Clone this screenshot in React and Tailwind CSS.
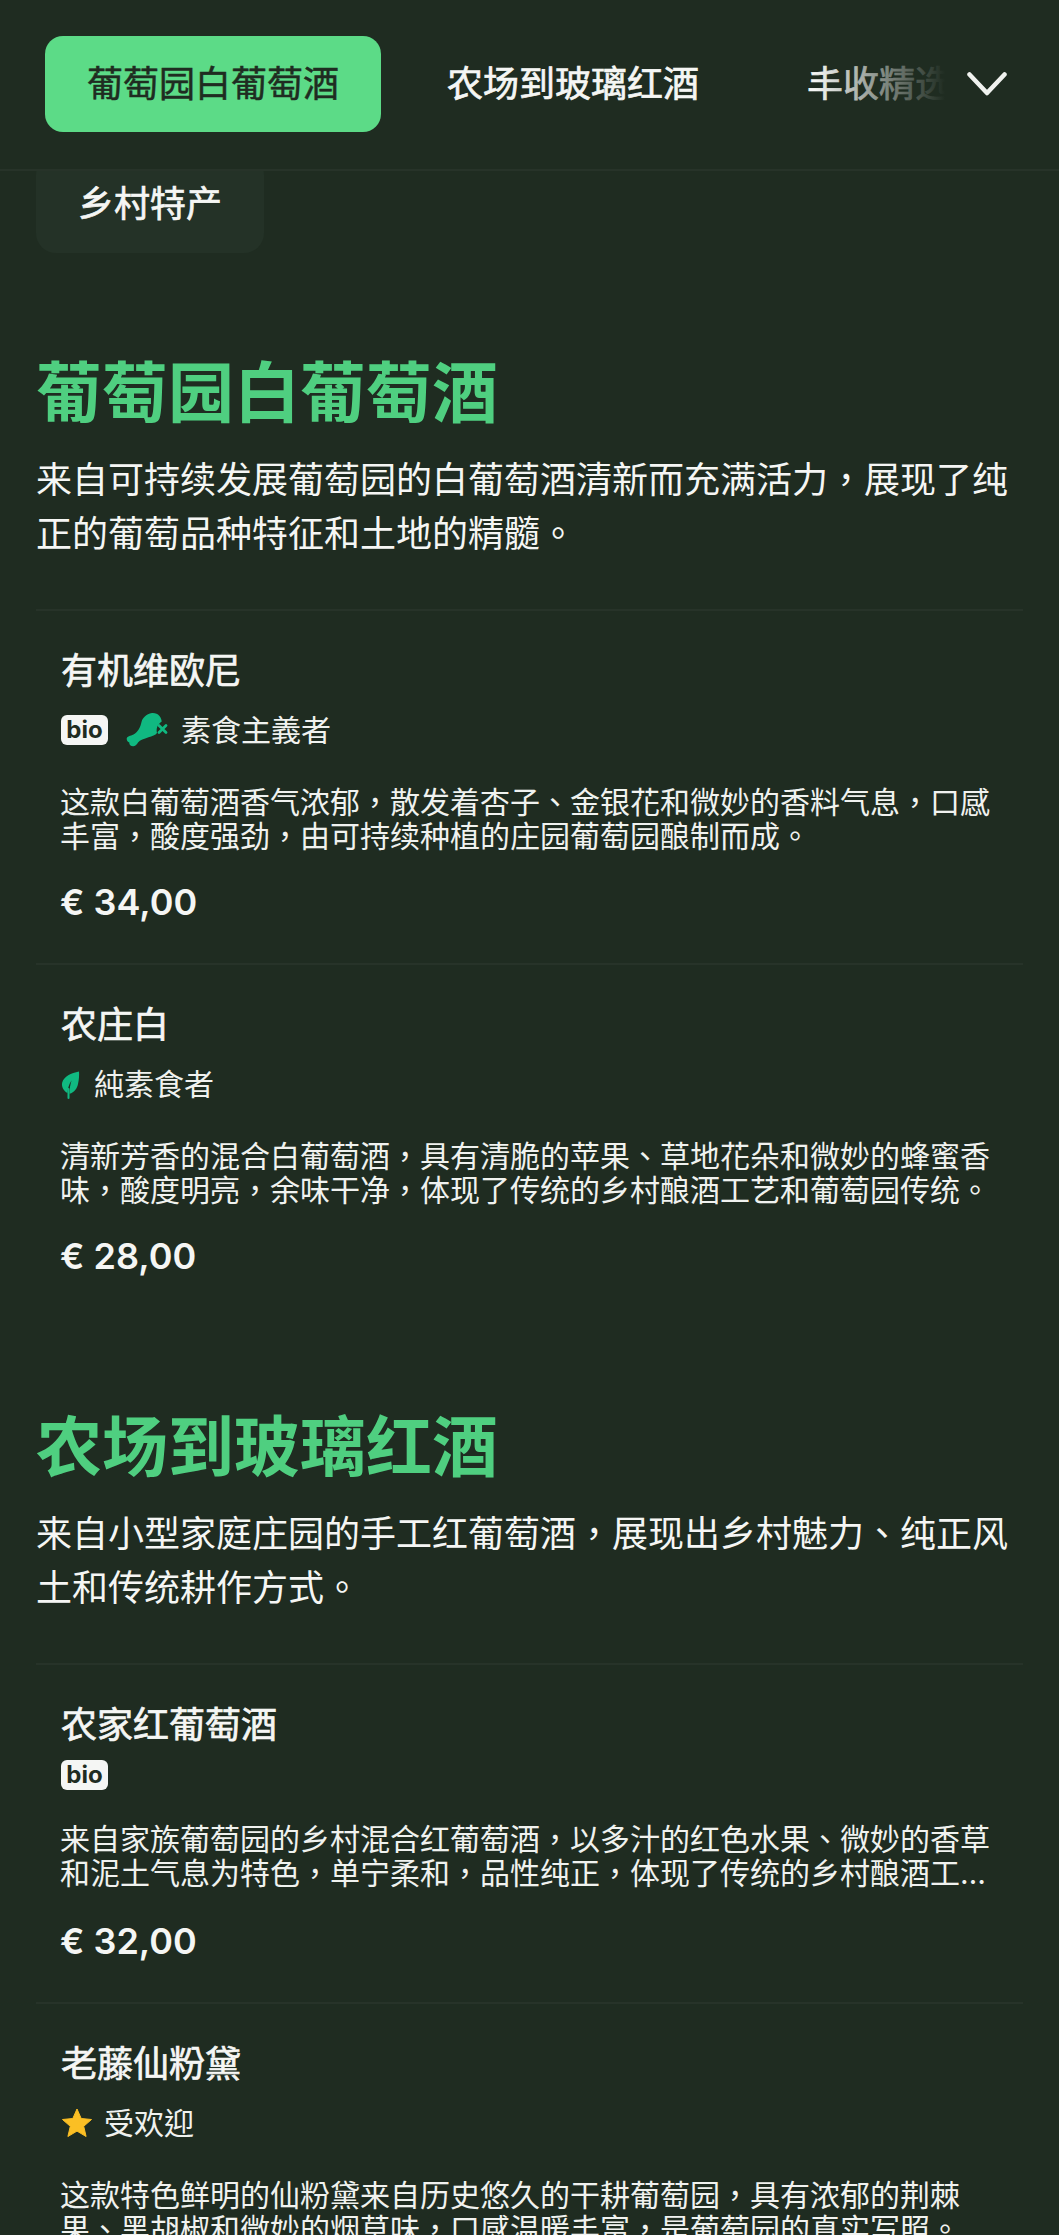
const CJK = "font-['Noto_Sans_CJK_TC',sans-serif]";
const LATIN = "font-['Inter',sans-serif]";
const LATIN_CJK = "font-['Inter','Noto_Sans_CJK_TC',sans-serif]";

function Drumstick() {
  return (
    <svg viewBox="0 0 42 38" className="w-[42px] h-[38px] shrink-0" aria-hidden="true">
      <path d="M26 2C20 3 16.500 7 15.500 11C14.500 16 12 21 7.500 23.500C4.500 25 .7 25 .7 28C.7 30 2 31 3.300 31.500C3 34 5 35.500 7.500 35.300C10 35 11 33 12 31.500C14 29 18 28 22.500 26.300C26 25 29.500 24.500 31 22C30 18 31 14 35.700 10.500C35.500 6 32 1.500 26 2Z" fill="#10b981" />
      <path d="M33 14.500l7 7M40 14.500l-7 7" stroke="#10b981" strokeWidth="2.800" strokeLinecap="round" />
    </svg>
  );
}

function Leaf() {
  return (
    <svg viewBox="0 0 20 30" className="w-[20px] h-[30px] shrink-0" aria-hidden="true">
      <path d="M18 2.500C10 4 3 7.500 1.200 13.500C.2 17.500 2.500 22 6.500 24C6.800 20 7.500 16 10.500 11.500C9.200 16 8.500 20 8.500 24.800C13.500 23.500 16 19.500 17 15C18 10.500 18.300 6 18 2.500Z" fill="#10b981" />
      <path d="M7.500 20v9" stroke="#10b981" strokeWidth="2" strokeLinecap="round" />
    </svg>
  );
}

function StarIcon() {
  return (
    <svg viewBox="0 0 32 32" className="w-[32px] h-[32px] shrink-0" aria-hidden="true">
      <path d="M16 2l4.200 9.500 10.300 1-7.800 6.800 2.400 10.200L16 24.100 6.900 29.500l2.400-10.200L1.500 12.500l10.300-1z" fill="#fbbf24" stroke="#fbbf24" strokeLinejoin="round" strokeWidth="1" />
    </svg>
  );
}

function Bio() {
  return (
    <span className={`flex h-[30px] w-[47px] items-center justify-center rounded-[6px] bg-[#f5f6f4] text-[24px] font-bold leading-none text-[#1f2c21] ${LATIN}`}>
      bio
    </span>
  );
}

function Item({ name, tags, desc, price, clamp, compact }) {
  return (
    <article className="border-t-2 border-[#273329] px-[24px] pt-[33px] pb-[39px]">
      <h3 className="pl-[1px] text-[36px] font-normal leading-[48px] text-[#f5f6f4] [-webkit-text-stroke:0.7px_#f5f6f4]">{name}</h3>
      <div className={`flex items-center pl-[1px] ${compact ? "mt-[14px] h-[30px]" : "mt-[18px] h-[40px]"}`}>{tags}</div>
      <p className={`text-[30px] leading-[34px] text-[#f0f2ef] ${compact ? "mt-[32px]" : "mt-[33px]"} ${clamp ? `line-clamp-2 ${LATIN_CJK}` : ""}`}>{desc}</p>
      <p className={`mt-[29px] text-[36px] font-semibold leading-[44px] text-[#f5f6f4] ${LATIN}`}>{price}</p>
    </article>
  );
}

function Section({ title, intro, first, children }) {
  return (
    <section className={first ? "mt-[95px]" : "mt-[85px]"}>
      <h2 className="text-[66px] font-bold leading-[80px] text-[#4fcf80]">{title}</h2>
      <p className="mt-[22px] text-[36px] leading-[54px] text-[#f5f6f4]">{intro}</p>
      <div className="mt-[51px]">{children}</div>
    </section>
  );
}

export default function App() {
  return (
    <div className={`h-[2235px] w-[1059px] overflow-hidden bg-[#1f2c21] ${CJK}`}>
      <header className="relative z-10 flex h-[171px] items-center border-b-2 border-[#273329] bg-[#1f2c21] pb-[2px]">
        <nav className="relative ml-[45px] flex w-[900px] items-center overflow-hidden">
          <span className="flex h-[96px] w-[336px] shrink-0 items-center justify-center rounded-[18px] bg-[#5cdb87] pb-[5px] text-[36px] font-normal text-[#1f2c21] [-webkit-text-stroke:0.5px_#1f2c21]">
            葡萄园白葡萄酒
          </span>
          <span className="ml-[66px] shrink-0 whitespace-nowrap pb-[5px] text-[36px] font-normal text-[#f5f6f4] [-webkit-text-stroke:0.7px_#f5f6f4]">农场到玻璃红酒</span>
          <span className="ml-[108px] shrink-0 whitespace-nowrap pb-[5px] text-[36px] font-normal text-[#f5f6f4] [-webkit-text-stroke:0.7px_#f5f6f4]">丰收精选红酒</span>
          <span className="absolute inset-y-0 right-0 w-[130px] bg-gradient-to-r from-transparent to-[#1f2c21]" />
        </nav>
        <svg viewBox="0 0 40 24" className="ml-[22px] h-[24px] w-[40px]" fill="none" aria-hidden="true">
          <path d="M2.500 2.500L20 21 37.500 2.500" stroke="#f0f2ef" strokeWidth="4.500" strokeLinecap="round" strokeLinejoin="round" />
        </svg>
      </header>

      <main className="px-[36px]">
        <div className="-mt-[16px] flex h-[98px] w-[228px] items-center justify-center rounded-[20px] bg-[#243227] pb-[6px] text-[36px] font-normal text-[#f5f6f4] [-webkit-text-stroke:0.7px_#f5f6f4]">
          乡村特产
        </div>

        <Section
          first
          title="葡萄园白葡萄酒"
          intro="来自可持续发展葡萄园的白葡萄酒清新而充满活力，展现了纯正的葡萄品种特征和土地的精髓。"
        >
          <Item
            name="有机维欧尼"
            tags={
              <>
                <Bio />
                <span className="ml-[18px]"><Drumstick /></span>
                <span className="ml-[13px] pb-[3px] text-[30px] text-[#f0f2ef]">素食主義者</span>
              </>
            }
            desc="这款白葡萄酒香气浓郁，散发着杏子、金银花和微妙的香料气息，口感丰富，酸度强劲，由可持续种植的庄园葡萄园酿制而成。"
            price="€ 34,00"
          />
          <Item
            name="农庄白"
            tags={
              <>
                <Leaf />
                <span className="ml-[13px] pb-[3px] text-[30px] text-[#f0f2ef]">純素食者</span>
              </>
            }
            desc="清新芳香的混合白葡萄酒，具有清脆的苹果、草地花朵和微妙的蜂蜜香味，酸度明亮，余味干净，体现了传统的乡村酿酒工艺和葡萄园传统。"
            price="€ 28,00"
          />
        </Section>

        <Section
          title="农场到玻璃红酒"
          intro="来自小型家庭庄园的手工红葡萄酒，展现出乡村魅力、纯正风土和传统耕作方式。"
        >
          <Item
            name="农家红葡萄酒"
            tags={<Bio />}
            desc="来自家族葡萄园的乡村混合红葡萄酒，以多汁的红色水果、微妙的香草和泥土气息为特色，单宁柔和，品性纯正，体现了传统的乡村酿酒工艺和葡萄园的风土特征，适合搭配丰盛的菜肴。"
            price="€ 32,00"
            clamp
            compact
          />
          <Item
            name="老藤仙粉黛"
            tags={
              <>
                <StarIcon />
                <span className="ml-[11px] pb-[3px] text-[30px] text-[#f0f2ef]">受欢迎</span>
              </>
            }
            desc="这款特色鲜明的仙粉黛来自历史悠久的干耕葡萄园，具有浓郁的荆棘果、黑胡椒和微妙的烟草味，口感温暖丰富，是葡萄园的真实写照。"
            price="€ 36,00"
          />
        </Section>
      </main>
    </div>
  );
}
